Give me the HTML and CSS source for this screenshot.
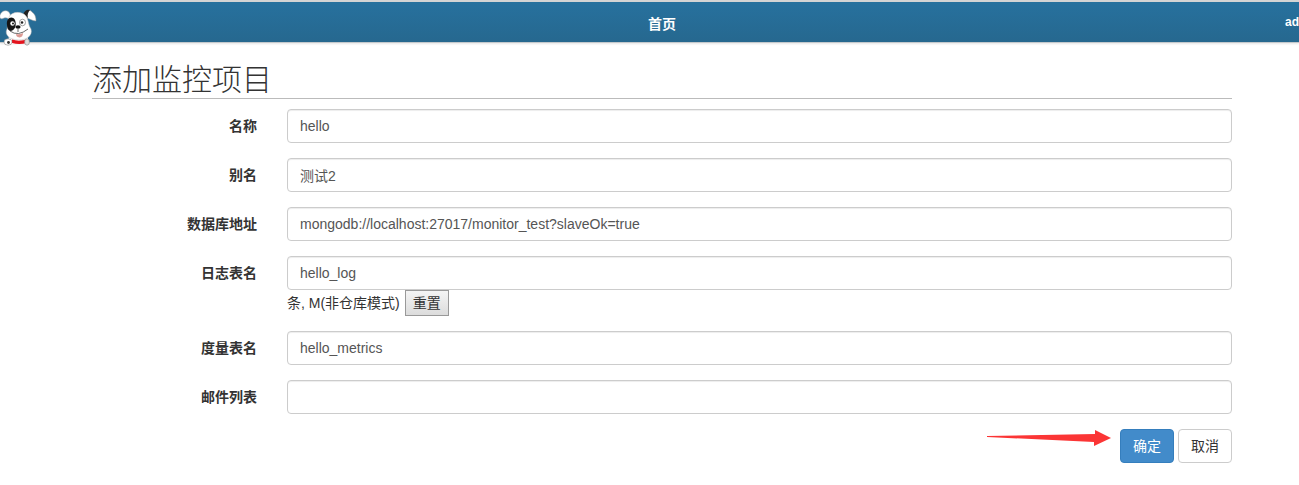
FILE: index.html
```html
<!DOCTYPE html>
<html lang="zh-CN">
<head>
<meta charset="utf-8">
<title>添加监控项目</title>
<link rel="stylesheet" href="styles.css">
</head>
<body>
<header class="navbar">
  <svg class="logo" viewBox="0 0 38 38" aria-hidden="true">
    <path d="M10 5C8 0 2 1 0 6C-1 9 1 11 4 9C7 8 8 10 11 10Z" fill="#fff" stroke="#aaa" stroke-width=".5"/>
    <path d="M24 6C25 1 30 0 32 3C35 5 36 8 36 12C32 12 29 9 26 9Z" fill="#fff" stroke="#999" stroke-width=".5"/>
    <path d="M23 6C24 2 27 0 30 1C28 3 27 6 28 9Z" fill="#222"/>
    <path d="M9 26H28V35H8Z" fill="#fff"/>
    <path d="M9 8C12 2 22 2 26 7C29 12 28 16 31 20C33 27 26 31 19 31C10 31 4 26 7 20Z" fill="#fff" stroke="#bbb" stroke-width=".5"/>
    <path d="M7 16C6 9 12 6 15 11C17 16 15 22 10 22C8 21 7 19 7 16Z" fill="#151515"/>
    <circle cx="12.500" cy="14.500" r="2.200" fill="#fff"/><circle cx="13" cy="14.500" r="1" fill="#111"/>
    <ellipse cx="22.500" cy="13.500" rx="3" ry="3.300" fill="#fff" stroke="#777" stroke-width=".7"/><circle cx="22" cy="13.500" r="1.300" fill="#222"/>
    <ellipse cx="18" cy="18" rx="2.600" ry="1.800" fill="#111"/>
    <path d="M10 22Q18 28 28 20M18 20V23" fill="none" stroke="#444" stroke-width=".8"/>
    <path d="M16 25Q19 26 23 24Q23 28 19.500 28.500Q16 28 16 25Z" fill="#dc9a94"/>
    <path d="M12 30.500Q19 33 28 30L27 34Q19 36 12 34Z" fill="#e3131d"/>
    <ellipse cx="8" cy="33" rx="4" ry="3.200" fill="#fff" stroke="#888" stroke-width=".6"/>
    <circle cx="8.500" cy="33.500" r="1.400" fill="#333"/>
    <ellipse cx="27" cy="33" rx="2.400" ry="3.200" fill="#ddd" stroke="#888" stroke-width=".6"/>
  </svg>
  <a class="nav-link" href="#">首页</a>
  <a class="nav-user" href="#">ad</a>
</header>
<main class="container">
  <form class="project-form">
    <h1 class="title">添加监控项目</h1>
    <div class="group">
      <label class="label" for="name">名称</label>
      <div class="field"><input class="control" id="name" type="text" value="hello"></div>
    </div>
    <div class="group">
      <label class="label" for="alias">别名</label>
      <div class="field"><input class="control" id="alias" type="text" value="测试2"></div>
    </div>
    <div class="group">
      <label class="label" for="db">数据库地址</label>
      <div class="field"><input class="control" id="db" type="text" value="mongodb://localhost:27017/monitor_test?slaveOk=true"></div>
    </div>
    <div class="group">
      <label class="label" for="log">日志表名</label>
      <div class="field">
        <input class="control" id="log" type="text" value="hello_log">
        <div class="hint"><span>条, M(非仓库模式)</span><button class="reset" type="button">重置</button></div>
      </div>
    </div>
    <div class="group">
      <label class="label" for="metrics">度量表名</label>
      <div class="field"><input class="control" id="metrics" type="text" value="hello_metrics"></div>
    </div>
    <div class="group">
      <label class="label" for="mail">邮件列表</label>
      <div class="field"><input class="control" id="mail" type="text" value=""></div>
    </div>
    <div class="actions">
      <svg class="arrow" viewBox="0 0 126 18" aria-hidden="true"><path d="M1 7L109 5V1L125 9L108 17V13L1 8Z" fill="#fb3535"/></svg>
      <button class="btn btn-primary" type="submit">确定</button>
      <button class="btn" type="button">取消</button>
    </div>
  </form>
</main>
</body>
</html>
```
FILE: styles.css
```css
* {
  box-sizing: border-box;
}

body {
  margin: 0;
  background: #fff;
  color: #333;
  font: 14px/20px "Liberation Sans", "Noto Sans CJK SC", sans-serif;
}

.navbar {
  position: relative;
  display: grid;
  grid-template-columns: 1fr auto 1fr;
  align-items: center;
  height: 43px;
  padding-left: 25px;
  border-top: 2px solid #d4d4d4;
  border-bottom: 1px solid #c4c9cc;
  background: linear-gradient(#27719e, #26688f);
  box-shadow: 0 1px 2px rgba(0, 0, 0, .1);
}

.logo {
  position: absolute;
  top: 7px;
  left: 0;
  width: 38px;
  height: 38px;
}

.nav-link,
.nav-user {
  color: #fff;
  font-weight: bold;
  text-decoration: none;
}

.nav-link {
  grid-column: 2;
  padding-top: 4px;
}

.nav-user {
  justify-self: end;
  font-size: 12px;
}

.container {
  padding: 19px 67px 22px 92px;
}

.title {
  margin: 0 0 10px;
  border-bottom: 1px solid #bbb;
  font-size: 30px;
  font-weight: 300;
  line-height: 36px;
}

.group {
  display: flex;
  gap: 30px;
  margin-bottom: 15px;
}

.label {
  flex: 0 0 165px;
  padding-top: 7px;
  font-weight: bold;
  text-align: right;
}

.field {
  flex: 1;
  min-width: 0;
}

.control {
  display: block;
  width: 100%;
  height: 34px;
  padding: 6px 12px;
  border: 1px solid #ccc;
  border-radius: 4px;
  background: #fff;
  box-shadow: inset 0 1px 1px rgba(0, 0, 0, .075);
  color: #555;
  font: inherit;
}

.hint {
  display: flex;
  align-items: center;
  gap: 5px;
}

.reset {
  height: 26px;
  padding: 0 7px;
  border: 1px solid #999;
  border-radius: 0;
  background: linear-gradient(#f4f4f4, #dcdcdc);
  color: #333;
  font: inherit;
}

.actions {
  display: flex;
  justify-content: flex-end;
  align-items: flex-start;
  gap: 4px;
}

.arrow {
  width: 126px;
  height: 18px;
  margin-right: 4px;
}

.btn {
  height: 34px;
  padding: 0 12px;
  border: 1px solid #ccc;
  border-radius: 4px;
  background: #fff;
  color: #333;
  font: inherit;
}

.btn-primary {
  border-color: #357ebd;
  background: #428bca;
  color: #fff;
}
```
